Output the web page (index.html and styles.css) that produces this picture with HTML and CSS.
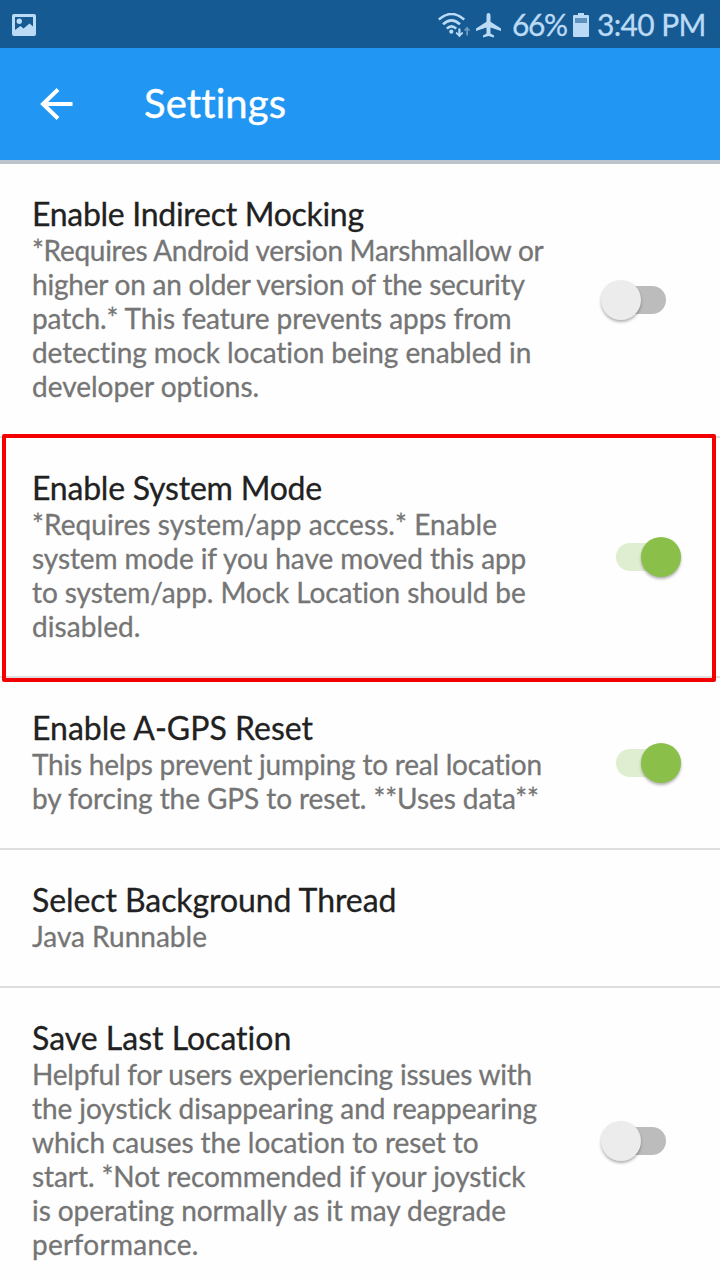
FILE: index.html
```html
<!DOCTYPE html>
<html lang="en">
<head>
<meta charset="utf-8">
<title>Settings</title>
<link rel="stylesheet" href="styles.css">
</head>
<body>
<div class="screen">
  <header class="status">
    <svg class="picture-icon" viewBox="0 0 24 22" width="24" height="22"><path fill-rule="evenodd" d="M2 0H22Q24 0 24 2V20Q24 22 22 22H2Q0 22 0 20V2Q0 0 2 0ZM3 3V16L8.5 12L11.500 14.500L17.500 9.500L21 12.500V3Z"/><circle cx="7.3" cy="7.3" r="2.7"/></svg>
    <div class="status-right">
      <svg class="wifi-icon" viewBox="0 0 32 26" width="32" height="26">
        <g fill="none" stroke="currentColor" stroke-width="2.6">
          <path d="M.8 6.5Q13.500-4.500 26.200 6.500"/><path d="M5 11.300Q13.500 3.500 22 11.300"/><path d="M8.800 15.600Q13.500 11.200 18.200 15.600"/>
        </g>
        <circle cx="13.300" cy="18.700" r="2.100"/>
        <path d="M20.300 15.500H22.500V20.500L24.300 18.700L25.200 20.300L21.400 24.200L17.600 20.300L18.600 18.700L20.300 20.500Z"/>
        <path opacity=".5" d="M28.200 22.500H30V17L31.300 18.300L32 17L29 13.500L26 17L27 18.300L28.200 17Z"/>
      </svg>
      <svg class="plane-icon" viewBox="0 0 25 25" width="25" height="25"><path d="M12.500 0C13.900 0 14.500 1.300 14.500 3V8.700L25 15.500V18L14.500 14.500V20.500L18 22.600V24.500L12.500 23L7 24.500V22.600L10.500 20.500V14.500L0 18V15.500L10.500 8.700V3C10.500 1.300 11.100 0 12.500 0Z"/></svg>
      <span class="percent">66%</span>
      <svg class="battery-icon" viewBox="0 0 16 24" width="16" height="24"><path opacity=".45" d="M2 5H14V10H2Z"/><path fill-rule="evenodd" d="M5 0H11V2H15Q16 2 16 3V23Q16 24 15 24H1Q0 24 0 23V3Q0 2 1 2H5ZM2 5V10H14V5Z"/></svg>
      <span class="clock">3:40 PM</span>
    </div>
  </header>
  <div class="appbar">
    <svg class="back-icon" viewBox="0 0 34 32" width="34" height="32"><path d="M32.500 16H3M18 1.500L3 16L18 30.500"/></svg>
    <h1>Settings</h1>
  </div>
  <main class="list">
    <section class="row">
      <div class="text">
        <h2 class="k3">Enable Indirect Mocking</h2>
        <p><span class="k3">*Requires Android version Marshmallow or</span><span class="k2">higher on an older version of the security</span><span class="k1">patch.* This feature prevents apps from</span><span class="k1">detecting mock location being enabled in</span><span>developer options.</span></p>
      </div>
      <div class="switch"><i class="thumb"></i></div>
    </section>
    <section class="row">
      <div class="text">
        <h2 class="k2">Enable System Mode</h2>
        <p><span class="w1">*Requires system/app access.* Enable</span><span class="k1">system mode if you have moved this app</span><span class="k1">to system/app. Mock Location should be</span><span class="w1">disabled.</span></p>
      </div>
      <div class="switch on"><i class="thumb"></i></div>
      <div class="highlight"></div>
    </section>
    <section class="row">
      <div class="text">
        <h2>Enable A-GPS Reset</h2>
        <p><span class="k2">This helps prevent jumping to real location</span><span class="k1">by forcing the GPS to reset. **Uses data**</span></p>
      </div>
      <div class="switch on"><i class="thumb"></i></div>
    </section>
    <section class="row">
      <div class="text">
        <h2 class="k1">Select Background Thread</h2>
        <p><span>Java Runnable</span></p>
      </div>
    </section>
    <section class="row">
      <div class="text">
        <h2>Save Last Location</h2>
        <p><span class="k2">Helpful for users experiencing issues with</span><span class="k1">the joystick disappearing and reappearing</span><span class="k1">which causes the location to reset to</span><span class="k1">start. *Not recommended if your joystick</span><span class="k1">is operating normally as it may degrade</span><span class="w3">performance.</span></p>
      </div>
      <div class="switch"><i class="thumb"></i></div>
    </section>
  </main>
</div>
</body>
</html>
```
FILE: styles.css
```css
* { box-sizing: border-box; }
body { margin: 0; background: #fefefe; font-family: Lato, "Open Sans", sans-serif; font-variant-ligatures: none; }
h1, h2, p { margin: 0; font-weight: 400; }
svg { display: block; fill: currentColor; flex: none; }

.screen { width: 720px; height: 1280px; overflow: hidden; }

.status { display: flex; justify-content: space-between; height: 48px; padding: 0 15px 0 12px; background: #155a92; color: #bbdaf5; }
.picture-icon { margin-top: 14px; }
.status-right { display: flex; align-items: flex-start; white-space: nowrap; font-size: 30px; line-height: 48px; -webkit-text-stroke: .3px; }
.wifi-icon { margin: 13px 6px 0 0; }
.plane-icon { margin: 13px 11px 0 0; }
.percent { width: 61px; letter-spacing: -1.4px; }
.battery-icon { margin: 13px 8px 0 0; }
.clock { width: 108px; letter-spacing: -.65px; }

.appbar { display: flex; align-items: center; height: 116px; padding-left: 40px; background: #2196f3; color: #fff; border-bottom: 4px solid #bcc5ce; }
.back-icon { fill: none; stroke: currentColor; stroke-width: 4; }
.appbar h1 { margin-left: 70px; padding-bottom: 2px; font-size: 40px; line-height: 48px; letter-spacing: .1px; -webkit-text-stroke: .4px; }

.row { position: relative; display: flex; justify-content: space-between; align-items: center; padding: 0 38px 0 32px; border-bottom: 2px solid #dedede; }
.text { padding: 31px 0 33px; white-space: nowrap; -webkit-text-stroke: .3px; }
.text h2 { font-size: 32px; line-height: 38px; color: #212121; }
.text p { font-size: 28px; line-height: 34px; color: #757575; }
.text p span { display: block; }

/* per-line tracking */
.k3 { letter-spacing: -.29px; }
.k2 { letter-spacing: -.22px; }
.k1 { letter-spacing: -.08px; }
.w1 { letter-spacing: .08px; }
.w3 { letter-spacing: .3px; }

.switch { display: flex; align-items: center; width: 58px; height: 28px; margin-right: 16px; border-radius: 14px; background: #bcbcbc; }
.thumb { flex: none; width: 40px; height: 40px; margin-left: -7px; border-radius: 50%; background: #ececec; box-shadow: 0 2px 3px rgba(0, 0, 0, .3); }
.switch.on { justify-content: flex-end; width: 65px; margin-right: 1px; background: #dfeed0; }
.switch.on .thumb { margin: 0; background: #8ac04a; }

.highlight { position: absolute; top: -4px; left: 2px; width: 714px; height: 248px; border: 4px solid #f50000; border-radius: 2px; }
```
